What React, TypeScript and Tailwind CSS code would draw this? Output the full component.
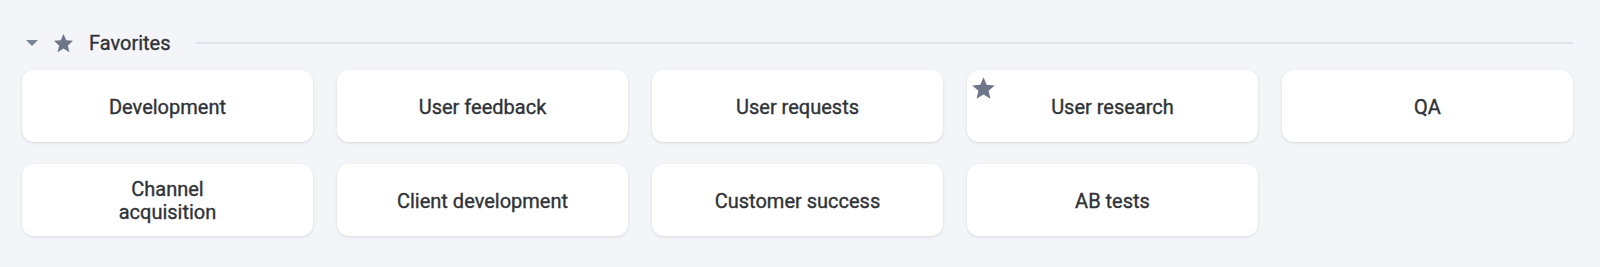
import React from "react";

const Star = ({ className }: { className?: string }) => (
  <svg viewBox="0 0 24 24" className={className} fill="currentColor">
    <path d="M12 17.27L18.18 21l-1.64-7.03L22 9.24l-7.19-.61L12 2 9.19 8.63 2 9.24l5.46 4.73L5.82 21z" />
  </svg>
);

const row1 = ["Development", "User feedback", "User requests", "User research", "QA"];
const row2 = ["Channel\nacquisition", "Client development", "Customer success", "AB tests"];

const Card = ({ label, starred }: { label: string; starred?: boolean }) => (
  <div className="relative h-[72px] bg-white rounded-[12px] shadow-[0_1px_3px_rgba(16,24,40,0.12)] flex items-center justify-center text-center px-4 pt-[2px]">
    {starred && <Star className="absolute left-[3px] top-[5px] w-[27px] h-[27px] text-[#6e7789]" />}
    <span className="whitespace-pre-line leading-[23px]">{label}</span>
  </div>
);

export default function App() {
  return (
    <div
      className="w-[1600px] h-[267px] bg-[#f3f5f8] pt-[31px] pl-[22px] pr-[27px] text-[20px] font-normal text-[#2f3237]"
      style={{ fontFamily: "Roboto, 'Noto Sans', sans-serif", WebkitTextStroke: "0.35px #2f3237" }}
    >
      <div className="flex items-center h-6">
        <div className="ml-[4px] w-0 h-0 border-l-[6.5px] border-r-[6.5px] border-t-[6px] border-l-transparent border-r-transparent border-t-[#7c8595]" />
        <Star className="ml-[14px] w-[23px] h-[23px] text-[#6e7789]" />
        <span className="ml-[14px]">Favorites</span>
        <div className="ml-[25px] flex-1 h-[2px] bg-[#e0e4ea]" />
      </div>
      <div className="mt-[15px] grid grid-cols-5 gap-x-6 gap-y-[22px]">
        {row1.map((l) => (
          <Card key={l} label={l} starred={l === "User research"} />
        ))}
        {row2.map((l) => (
          <Card key={l} label={l} />
        ))}
      </div>
    </div>
  );
}
